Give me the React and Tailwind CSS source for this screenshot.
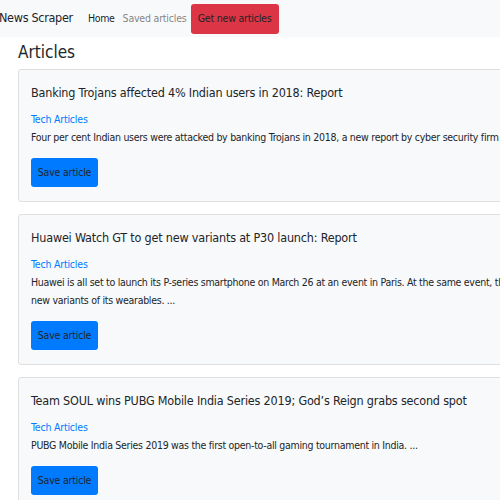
import React from 'react';

const articles = [
  {
    title: 'Banking Trojans affected 4% Indian users in 2018: Report',
    lines: [
      'Four per cent Indian users were attacked by banking Trojans in 2018, a new report by cyber security firm Kaspersky Lab said on Tuesday. ...',
    ],
  },
  {
    title: 'Huawei Watch GT to get new variants at P30 launch: Report',
    lines: [
      'Huawei is all set to launch its P-series smartphone on March 26 at an event in Paris. At the same event, the company is also expected to launch',
      'new variants of its wearables. ...',
    ],
  },
  {
    title: "Team SOUL wins PUBG Mobile India Series 2019; God\u2019s Reign grabs second spot",
    lines: ['PUBG Mobile India Series 2019 was the first open-to-all gaming tournament in India. ...'],
  },
];

function ArticleCard({ title, lines }) {
  return (
    <div className="w-[700px] border border-[#dfdfdf] rounded-[3px] bg-[#f8f9fa] px-[12px] pt-[15px] pb-[14px]">
      <h5 className="text-[12.5px] leading-[16px] tracking-[-0.2px] text-[#212529] whitespace-nowrap">{title}</h5>
      <a href="#" className="block mt-[9px] text-[10.5px] leading-[18px] tracking-[-0.2px] text-[#007bff]">
        Tech Articles
      </a>
      <p className="text-[10.5px] leading-[18px] tracking-[-0.28px] text-[#212529]">
        {lines.map((l) => (
          <span key={l} className="block whitespace-nowrap">{l}</span>
        ))}
      </p>
      <button className="mt-[12px] h-[29px] w-[67px] rounded-[3px] bg-[#007bff] text-[10.5px] tracking-[-0.2px] text-[#212529]">
        Save article
      </button>
    </div>
  );
}

export default function App() {
  return (
    <div
      className="w-[500px] h-[500px] overflow-hidden bg-white"
      style={{ fontFamily: '"DejaVu Sans Condensed", "Liberation Sans", sans-serif' }}
    >
      {/* navbar */}
      <nav className="h-[37px] bg-[#f8f9fa] flex items-center">
        <span className="ml-[-1px] text-[12.5px] tracking-[-0.3px] text-[#212529]">News Scraper</span>
        <a href="#" className="ml-[15px] text-[10.5px] tracking-[-0.3px] text-[rgba(0,0,0,0.9)]">Home</a>
        <a href="#" className="ml-[8px] text-[10.5px] tracking-[-0.2px] text-[rgba(0,0,0,0.5)]">Saved articles</a>
        <button className="ml-[4px] h-[30px] w-[88px] rounded-[3px] bg-[#dc3545] text-[10.5px] tracking-[-0.2px] text-[#212529]">
          Get new articles
        </button>
      </nav>

      <div className="pl-[18px]">
        <h4 className="mt-[5px] text-[17px] leading-[20px] text-[#212529]">Articles</h4>
        <div className="mt-[7px] flex flex-col gap-[12px]">
          {articles.map((a) => (
            <ArticleCard key={a.title} {...a} />
          ))}
        </div>
      </div>
    </div>
  );
}
